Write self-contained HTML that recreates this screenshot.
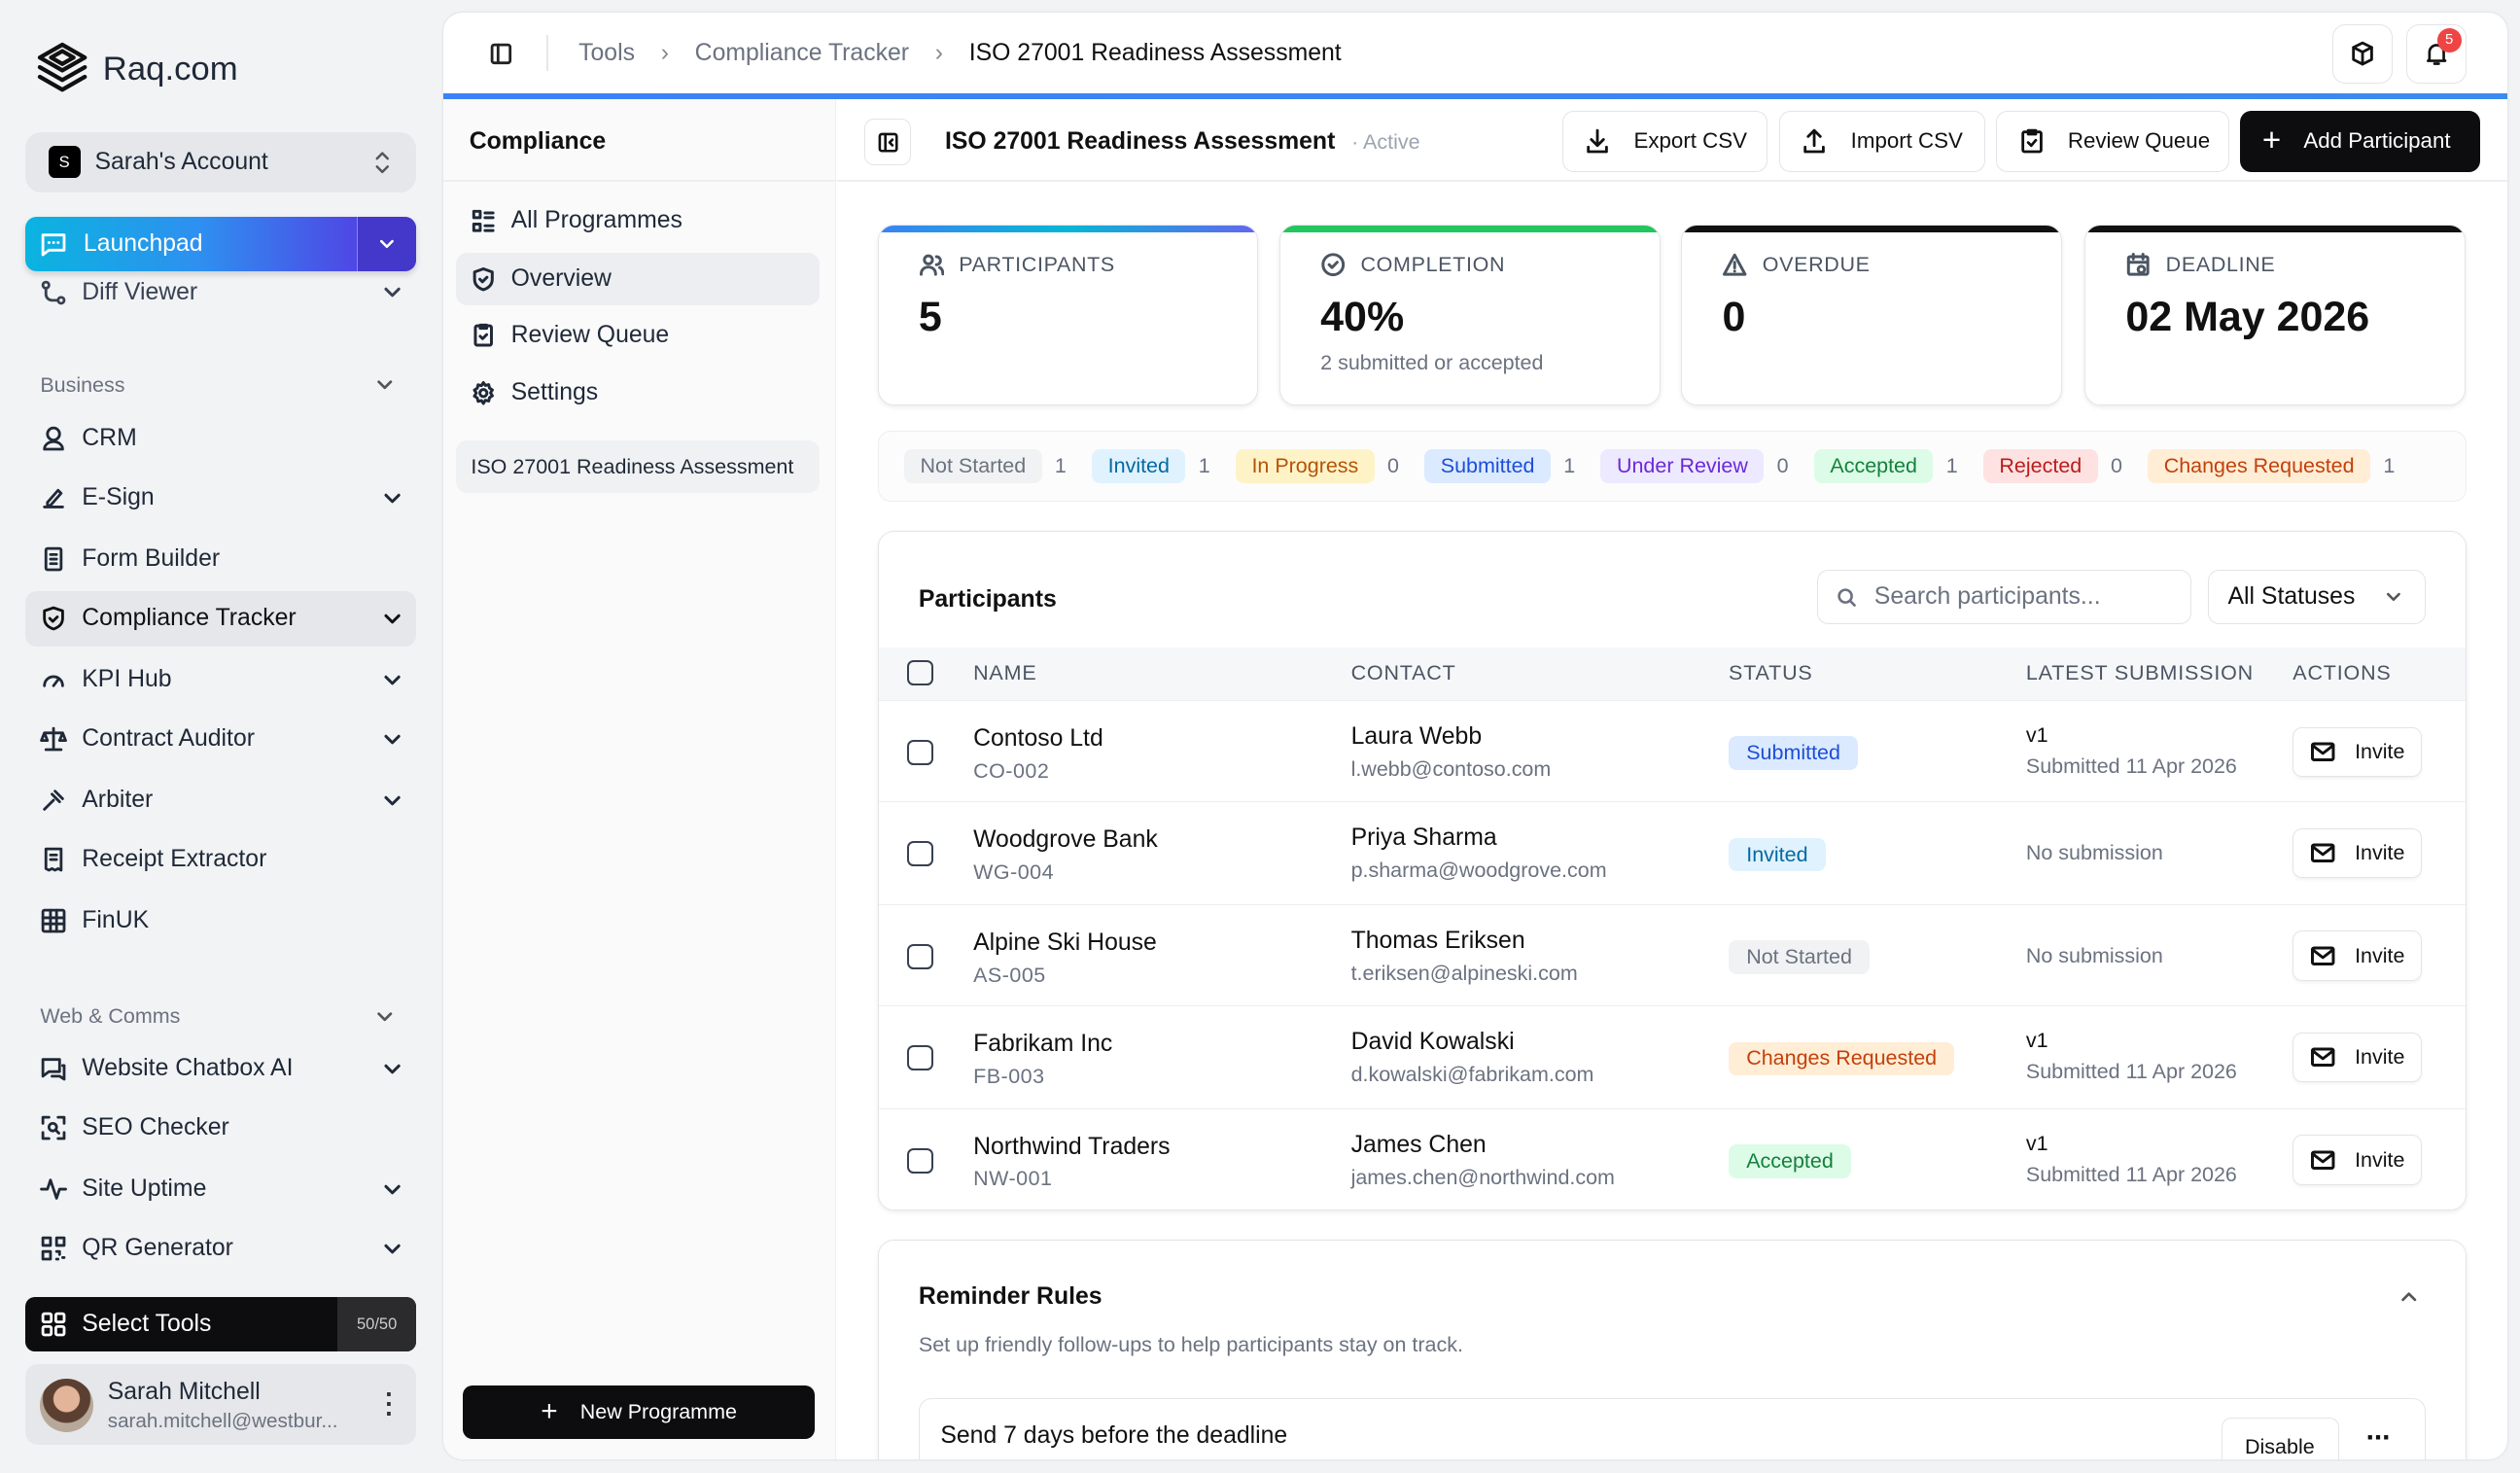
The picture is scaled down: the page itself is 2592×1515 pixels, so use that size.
<!DOCTYPE html>
<html><head><meta charset="utf-8">
<style>
html{zoom:1.6531}
*{box-sizing:border-box;margin:0;padding:0}
body{width:1568px;height:916px;overflow:hidden;background:#f2f3f5;font-family:"Liberation Sans",Arial,sans-serif;color:#111;position:relative;font-size:14px}
.abs{position:absolute}
svg{fill:none;stroke:currentColor;stroke-width:1.8;stroke-linecap:round;stroke-linejoin:round}
.side{left:16px;width:243px}
.item{position:absolute;left:16px;width:243px;height:34px;display:flex;align-items:center;padding-left:9px;font-size:15px;color:#1f2937}
.item svg{width:17px;height:17px;margin-right:9px}
.item .chev{position:absolute;right:8px;width:14px;height:14px;margin:0}
.sec{position:absolute;left:25px;font-size:13px;color:#6b7280}
.main{left:276px;top:8px;width:1284px;height:900px;background:#fff;border-radius:12px;overflow:hidden;box-shadow:0 0 0 1px #e8e9ec}
.nav{position:absolute;left:8px;width:226px;height:33px;display:flex;align-items:center;padding-left:9px;font-size:15px;color:#1f2937;border-radius:7px}
.nav svg{width:16px;height:16px;margin-right:9px}
.btn{position:absolute;top:61px;height:38px;border:1px solid #e2e4e8;border-radius:7px;display:flex;align-items:center;padding:0 13px;font-size:13.5px;color:#111;background:#fff;white-space:nowrap}
.btn svg{width:17px;height:17px;margin-right:14px;flex:none}
.card{position:absolute;top:132px;width:237px;height:112px;border:1px solid #e3e5e9;border-radius:10px;box-shadow:0 1px 3px rgba(0,0,0,.08);overflow:hidden;background:#fff}
.card .bar{height:4px}
.card .lab{position:absolute;left:25px;top:16px;font-size:13px;color:#4b5563;letter-spacing:.4px;display:flex;align-items:center}
.card .lab svg{width:16px;height:16px;margin-right:9px}
.card .val{position:absolute;left:25px;top:42px;font-size:26px;font-weight:bold}
.card .sub{position:absolute;left:25px;top:78px;font-size:13px;color:#6b7280}
.pill{display:inline-block;padding:3px 10px;border-radius:5px;font-size:13px;margin-right:8px}
.cnt{font-size:13px;color:#6b7280;margin-right:12px}
.row{position:absolute;left:0;width:988px;height:63px;border-top:1px solid #eceef1}
.cb{position:absolute;left:18px;width:16px;height:16px;border:1.5px solid #374151;border-radius:4px}
.row .n{position:absolute;left:59px;top:15px;font-size:15px}
.row .c{position:absolute;left:59px;top:36px;font-size:13px;color:#6b7280;letter-spacing:.3px}
.row .p{position:absolute;left:294px;top:14px;font-size:15px}
.row .e{position:absolute;left:294px;top:35px;font-size:13px;color:#6b7280}
.row .st{position:absolute;left:529px;top:22px;font-size:13px;padding:3px 11px;border-radius:5px}
.row .v{position:absolute;left:714px;top:14px;font-size:13px}
.row .sd{position:absolute;left:714px;top:33px;font-size:13px;color:#6b7280}
.row .ns{position:absolute;left:714px;top:24px;font-size:13px;color:#6b7280}
.inv{position:absolute;left:880px;top:16px;width:80px;height:31px;border:1px solid #e2e4e8;border-radius:6px;display:flex;align-items:center;padding-left:10px;font-size:13px;box-shadow:0 1px 2px rgba(0,0,0,.05)}
.inv svg{width:16px;height:16px;margin-right:12px}
</style></head><body>

<div class="abs" style="left:22px;top:25px;display:flex;align-items:center">
<svg viewBox="0 0 34 36" style="width:34px;height:36px;stroke:#111;stroke-width:2.6"><path d="M17 3 3 11l14 8 14-8z"/><path d="M3 17l14 8 14-8"/><path d="M3 23l14 8 14-8"/><path d="M10 11l7-4 7 4-7 4z"/></svg>
<span style="font-size:21px;margin-left:8px;color:#1f2937">Raq.com</span></div>

<div class="abs side" style="top:82px;height:38px;background:#e6e7ea;border-radius:10px;display:flex;align-items:center;padding-left:14px">
<span style="width:20px;height:20px;background:#000;color:#fff;border-radius:4px;font-size:10px;display:flex;align-items:center;justify-content:center">S</span>
<span style="font-size:15px;margin-left:9px;color:#1f2937">Sarah's Account</span>
<svg viewBox="0 0 12 18" style="position:absolute;right:16px;width:10px;height:16px;stroke:#555"><path d="M2 6l4-4 4 4M2 12l4 4 4-4"/></svg></div>

<div class="item" style="top:165px;color:#374151"><svg viewBox="0 0 18 18"><circle cx="4" cy="4" r="2"/><circle cx="14" cy="14" r="2"/><path d="M4 6v4a4 4 0 0 0 4 4h4"/></svg>Diff Viewer<svg class="chev" viewBox="0 0 14 14"><path d="M3 5l4 4 4-4"/></svg></div>

<div class="abs side" style="top:135px;height:34px;border-radius:7px;background:linear-gradient(90deg,#0ab4e0,#2f8ff0 45%,#4f46e5 85%);display:flex;align-items:center;padding-left:9px;color:#fff;font-size:15px;box-shadow:0 2px 4px rgba(0,0,0,.15)">
<svg viewBox="0 0 18 18" style="width:17px;height:17px;margin-right:10px"><path d="M2 3h14v10H6l-4 3z"/><path d="M6 8h.1M9 8h.1M12 8h.1"/></svg>Launchpad
<div style="position:absolute;right:0;top:0;width:37px;height:34px;background:#4338ca;border-left:1px solid rgba(255,255,255,.4);border-radius:0 7px 7px 0;display:flex;align-items:center;justify-content:center"><svg viewBox="0 0 14 14" style="width:12px;height:12px"><path d="M3 5l4 4 4-4"/></svg></div></div>

<div class="sec" style="top:232px">Business</div><svg class="abs" viewBox="0 0 14 14" style="left:233px;top:233px;width:13px;height:13px;stroke:#555"><path d="M3 5l4 4 4-4"/></svg>
<div class="item" style="top:256px"><svg viewBox="0 0 18 18"><circle cx="9" cy="6" r="4"/><path d="M3 16c0-3 3-5 6-5s6 2 6 5z"/></svg>CRM</div>
<div class="item" style="top:293px"><svg viewBox="0 0 18 18"><path d="M3 15h12M5 12l7-8 2 2-7 8H5z"/></svg>E-Sign<svg class="chev" viewBox="0 0 14 14"><path d="M3 5l4 4 4-4"/></svg></div>
<div class="item" style="top:331px"><svg viewBox="0 0 18 18"><rect x="4" y="2" width="10" height="14" rx="1"/><path d="M7 6h4M7 9h4M7 12h4"/></svg>Form Builder</div>
<div class="item" style="top:368px;background:#e6e7ea;border-radius:7px;font-weight:500;color:#111"><svg viewBox="0 0 18 18"><path d="M9 2l6 2v5c0 4-3 6-6 7-3-1-6-3-6-7V4z"/><path d="M6.5 9l2 2 3-3"/></svg>Compliance Tracker<svg class="chev" viewBox="0 0 14 14"><path d="M3 5l4 4 4-4"/></svg></div>
<div class="item" style="top:406px"><svg viewBox="0 0 18 18"><path d="M3 13a6 6 0 1 1 12 0"/><path d="M9 13l3-4"/></svg>KPI Hub<svg class="chev" viewBox="0 0 14 14"><path d="M3 5l4 4 4-4"/></svg></div>
<div class="item" style="top:443px"><svg viewBox="0 0 18 18"><path d="M9 2v14M4 16h10M3 5h12M3 5l-2 5h4zM15 5l-2 5h4z"/></svg>Contract Auditor<svg class="chev" viewBox="0 0 14 14"><path d="M3 5l4 4 4-4"/></svg></div>
<div class="item" style="top:481px"><svg viewBox="0 0 18 18"><path d="M10 3l5 5M8 5l5 5M3 15l6-6"/></svg>Arbiter<svg class="chev" viewBox="0 0 14 14"><path d="M3 5l4 4 4-4"/></svg></div>
<div class="item" style="top:518px"><svg viewBox="0 0 18 18"><path d="M4 2h10v14l-2-1-2 1-2-1-2 1-2-1z"/><path d="M7 6h4M7 9h4"/></svg>Receipt Extractor</div>
<div class="item" style="top:556px"><svg viewBox="0 0 18 18"><rect x="2" y="2" width="14" height="14" rx="1"/><path d="M2 7h14M2 11h14M7 2v14M11 2v14"/></svg>FinUK</div>

<div class="sec" style="top:625px">Web &amp; Comms</div><svg class="abs" viewBox="0 0 14 14" style="left:233px;top:626px;width:13px;height:13px;stroke:#555"><path d="M3 5l4 4 4-4"/></svg>
<div class="item" style="top:648px"><svg viewBox="0 0 18 18"><path d="M2 3h11v8H6l-4 3z"/><path d="M15 7h1v9l-3-2H8"/></svg>Website Chatbox AI<svg class="chev" viewBox="0 0 14 14"><path d="M3 5l4 4 4-4"/></svg></div>
<div class="item" style="top:685px"><svg viewBox="0 0 18 18"><path d="M2 6V2h4M12 2h4v4M16 12v4h-4M6 16H2v-4"/><circle cx="8.5" cy="8.5" r="2.5"/><path d="M10.5 10.5l2 2"/></svg>SEO Checker</div>
<div class="item" style="top:723px"><svg viewBox="0 0 18 18"><path d="M1 9h4l2-6 4 12 2-6h4"/></svg>Site Uptime<svg class="chev" viewBox="0 0 14 14"><path d="M3 5l4 4 4-4"/></svg></div>
<div class="item" style="top:760px"><svg viewBox="0 0 18 18"><rect x="2" y="2" width="5" height="5"/><rect x="11" y="2" width="5" height="5"/><rect x="2" y="11" width="5" height="5"/><path d="M11 11h2v2M15 15h1M11 16h1"/></svg>QR Generator<svg class="chev" viewBox="0 0 14 14"><path d="M3 5l4 4 4-4"/></svg></div>

<div class="abs side" style="top:807px;height:34px;background:#0d0d0f;border-radius:6px;color:#fff;display:flex;align-items:center;padding-left:9px;font-size:15px">
<svg viewBox="0 0 18 18" style="width:17px;height:17px;margin-right:9px"><rect x="2" y="2" width="5.5" height="5.5" rx="1"/><rect x="10.5" y="2" width="5.5" height="5.5" rx="1"/><rect x="2" y="10.5" width="5.5" height="5.5" rx="1"/><rect x="10.5" y="10.5" width="5.5" height="5.5" rx="1"/></svg>Select Tools
<div style="position:absolute;right:0;top:0;width:49px;height:34px;background:#2b2b2e;border-radius:0 6px 6px 0;font-size:10px;color:#ccc;display:flex;align-items:center;justify-content:center">50/50</div></div>

<div class="abs side" style="top:849px;height:50px;background:#e6e7ea;border-radius:8px">
<div style="position:absolute;left:9px;top:9px;width:33px;height:33px;border-radius:50%;background:radial-gradient(circle at 50% 38%,#e2b59a 0 30%,#5b4032 32% 55%,#b7a89a 57%)"></div>
<div style="position:absolute;left:51px;top:9px;font-size:15px;color:#1f2937">Sarah Mitchell</div>
<div style="position:absolute;left:51px;top:28px;font-size:12.5px;color:#6b7280">sarah.mitchell@westbur...</div>
<div style="position:absolute;right:14px;top:16px;font-size:16px;font-weight:bold;line-height:6px;color:#333">·<br>·<br>·</div></div>

<div class="abs main">
 <svg class="abs" viewBox="0 0 16 16" style="left:28px;top:18px;width:15px;height:15px;stroke:#222"><rect x="2" y="2" width="12" height="12" rx="1.5"/><path d="M6 2v12"/></svg>
 <div class="abs" style="left:64px;top:14px;width:1px;height:22px;background:#e5e7eb"></div>
 <div class="abs" style="left:84px;top:17px;font-size:15px;color:#6b7280;white-space:nowrap">Tools <span style="margin:0 12px;color:#888">›</span> Compliance Tracker <span style="margin:0 12px;color:#888">›</span> <span style="color:#111">ISO 27001 Readiness Assessment</span></div>
 <div class="abs" style="left:1175px;top:7px;width:38px;height:37px;border:1px solid #e2e4e8;border-radius:8px;display:flex;align-items:center;justify-content:center"><svg viewBox="0 0 18 18" style="width:17px;height:17px"><path d="M9 2l6 3v8l-6 3-6-3V5z"/><path d="M3 5l6 3 6-3M9 8v8"/></svg></div>
 <div class="abs" style="left:1221px;top:7px;width:38px;height:37px;border:1px solid #e2e4e8;border-radius:8px;display:flex;align-items:center;justify-content:center"><svg viewBox="0 0 18 18" style="width:16px;height:16px"><path d="M4 13V8a5 5 0 0 1 10 0v5l1 1H3zM7.5 16h3"/></svg><span style="position:absolute;right:3px;top:2px;width:15px;height:15px;border-radius:50%;background:#ef4444;color:#fff;font-size:9px;display:flex;align-items:center;justify-content:center">5</span></div>
 <div class="abs" style="left:0;top:50px;width:1284px;height:4px;background:linear-gradient(90deg,#3b82f6,#3b8af0)"></div>

 <div class="abs" style="left:0;top:54px;width:244px;height:846px;background:#fafafb;border-right:1px solid #eceef1">
  <div style="position:absolute;left:16px;top:18px;font-size:15px;font-weight:bold">Compliance</div>
  <div style="position:absolute;left:0;top:50px;width:244px;height:1px;background:#eceef1"></div>
  <div class="nav" style="top:59px"><svg viewBox="0 0 16 16"><rect x="2" y="2" width="4" height="4"/><rect x="2" y="10" width="4" height="4"/><path d="M9 3h5M9 6h5M9 11h5M9 14h5"/></svg>All Programmes</div>
  <div class="nav" style="top:95px;background:#eceef1"><svg viewBox="0 0 16 16"><path d="M8 1.5l5.5 2v4.5c0 3.5-2.5 5.5-5.5 6.5-3-1-5.5-3-5.5-6.5V3.5z"/><path d="M5.8 8l1.6 1.6 2.8-2.8"/></svg>Overview</div>
  <div class="nav" style="top:130px"><svg viewBox="0 0 16 16"><rect x="3" y="2.5" width="10" height="12" rx="1"/><path d="M6 2h4v2H6zM6 9l1.5 1.5L10 8"/></svg>Review Queue</div>
  <div class="nav" style="top:166px"><svg viewBox="0 0 16 16"><circle cx="8" cy="8" r="2.2"/><path d="M8 1.5l1.2 1.8 2.1-.5.5 2.1 1.8 1.2-1.2 1.8 1.2 1.8-1.8 1.2-.5 2.1-2.1-.5L8 14.5l-1.2-1.8-2.1.5-.5-2.1-1.8-1.2L3.6 8 2.4 6.2l1.8-1.2.5-2.1 2.1.5z"/></svg>Settings</div>
  <div class="nav" style="top:212px;height:33px;background:#f0f1f3;font-size:13px">ISO 27001 Readiness Assessment</div>
  <div style="position:absolute;left:12px;top:800px;width:219px;height:33px;background:#0d0d0f;border-radius:6px;color:#fff;font-size:13px;display:flex;align-items:center;justify-content:center"><span style="font-size:18px;margin-right:14px;font-weight:300">+</span>New Programme</div>
 </div>

 <div class="abs" style="left:245px;top:54px;width:1039px;height:846px">
  <div class="abs" style="left:0;top:50px;width:1039px;height:1px;background:#eceef1"></div>
  <div class="abs" style="left:17px;top:12px;width:29px;height:29px;border:1px solid #e2e4e8;border-radius:6px;display:flex;align-items:center;justify-content:center"><svg viewBox="0 0 16 16" style="width:14px;height:14px"><rect x="2" y="2" width="12" height="12" rx="1.5"/><path d="M6 2v12M11 6l-2 2 2 2"/></svg></div>
  <div class="abs" style="left:67px;top:18px;font-size:15px;font-weight:bold;white-space:nowrap">ISO 27001 Readiness Assessment <span style="font-weight:normal;color:#9ca3af;font-size:13px;margin-left:6px">· Active</span></div>
  <div class="btn" style="left:451px;top:7px;width:128px"><svg viewBox="0 0 18 18"><path d="M9 2v9M5 8l4 4 4-4M3 13v3h12v-3"/></svg>Export CSV</div>
  <div class="btn" style="left:586px;top:7px;width:128px"><svg viewBox="0 0 18 18"><path d="M9 12V3M5 6l4-4 4 4M3 13v3h12v-3"/></svg>Import CSV</div>
  <div class="btn" style="left:721px;top:7px;width:145px"><svg viewBox="0 0 18 18"><rect x="3" y="3" width="12" height="13" rx="1"/><path d="M6.5 2h5v2.5h-5zM6.5 10l2 2 3-3.5"/></svg>Review Queue</div>
  <div class="btn" style="left:873px;top:7px;width:149px;background:#0d0d0f;color:#fff;border-color:#0d0d0f"><span style="font-size:20px;margin-right:14px;font-weight:300">+</span>Add Participant</div>

  <div class="card" style="left:25px;top:78px"><div class="bar" style="background:linear-gradient(90deg,#3b82f6,#06b6d4,#6366f1)"></div><div class="lab"><svg viewBox="0 0 16 16"><circle cx="6" cy="5" r="2.5"/><path d="M1.5 14c0-3 2-4.5 4.5-4.5s4.5 1.5 4.5 4.5M11 3a2.5 2.5 0 0 1 0 5M13 9.8c1.5.6 2 2 2 4"/></svg>PARTICIPANTS</div><div class="val">5</div></div>
  <div class="card" style="left:275px;top:78px"><div class="bar" style="background:#22c55e"></div><div class="lab"><svg viewBox="0 0 16 16"><circle cx="8" cy="8" r="6.3"/><path d="M5.5 8l1.8 1.8L10.5 6.5"/></svg>COMPLETION</div><div class="val">40%</div><div class="sub">2 submitted or accepted</div></div>
  <div class="card" style="left:525px;top:78px"><div class="bar" style="background:#111"></div><div class="lab"><svg viewBox="0 0 16 16"><path d="M8 2L1.5 14h13z"/><path d="M8 6.5v3.5M8 12h.01"/></svg>OVERDUE</div><div class="val">0</div></div>
  <div class="card" style="left:776px;top:78px"><div class="bar" style="background:#111"></div><div class="lab"><svg viewBox="0 0 16 16"><rect x="2" y="3" width="12" height="11" rx="1"/><path d="M5 1.5v3M11 1.5v3M2 6.5h12"/><circle cx="10" cy="11" r="2"/></svg>DEADLINE</div><div class="val">02 May 2026</div></div>

  <div class="abs" style="left:25px;top:206px;width:989px;height:44px;border:1px solid #eceef1;border-radius:8px;background:#fcfcfd;padding:11px 0 0 16px;white-space:nowrap">
   <span class="pill" style="background:#f1f2f4;color:#6b7280">Not Started</span><span class="cnt">1</span>
   <span class="pill" style="background:#e0f2fe;color:#0369a1">Invited</span><span class="cnt">1</span>
   <span class="pill" style="background:#fef3c7;color:#b45309">In Progress</span><span class="cnt">0</span>
   <span class="pill" style="background:#dbeafe;color:#1d4ed8">Submitted</span><span class="cnt">1</span>
   <span class="pill" style="background:#ede9fe;color:#6d28d9">Under Review</span><span class="cnt">0</span>
   <span class="pill" style="background:#dcfce7;color:#15803d">Accepted</span><span class="cnt">1</span>
   <span class="pill" style="background:#fee2e2;color:#b91c1c">Rejected</span><span class="cnt">0</span>
   <span class="pill" style="background:#ffedd5;color:#c2410c">Changes Requested</span><span class="cnt">1</span>
  </div>

  <div class="abs" style="left:25px;top:268px;width:989px;height:423px;border:1px solid #e3e5e9;border-radius:10px;box-shadow:0 1px 3px rgba(0,0,0,.07);overflow:hidden">
   <div class="abs" style="left:25px;top:34px;font-size:15px;font-weight:bold">Participants</div>
   <div class="abs" style="left:584px;top:24px;width:233px;height:34px;border:1px solid #e2e4e8;border-radius:7px;display:flex;align-items:center;padding-left:11px;font-size:15px;color:#6b7280"><svg viewBox="0 0 16 16" style="width:14px;height:14px;margin-right:10px"><circle cx="7" cy="7" r="4.5"/><path d="M10.5 10.5l3 3"/></svg>Search participants...</div>
   <div class="abs" style="left:827px;top:24px;width:136px;height:34px;border:1px solid #e2e4e8;border-radius:7px;display:flex;align-items:center;padding-left:12px;font-size:15px">All Statuses<svg viewBox="0 0 14 14" style="position:absolute;right:14px;width:12px;height:12px;stroke:#555"><path d="M3 5l4 4 4-4"/></svg></div>
   <div class="abs" style="left:0;top:72px;width:989px;height:33px;background:#f6f7f9;font-size:13px;color:#4b5563;letter-spacing:.5px">
    <div class="cb" style="top:8px"></div>
    <span class="abs" style="left:59px;top:9px">NAME</span><span class="abs" style="left:294px;top:9px">CONTACT</span><span class="abs" style="left:529px;top:9px">STATUS</span><span class="abs" style="left:714px;top:9px">LATEST SUBMISSION</span><span class="abs" style="left:880px;top:9px">ACTIONS</span>
   </div>
   <div class="row" style="top:105px"><div class="cb" style="top:24px"></div><div class="n">Contoso Ltd</div><div class="c">CO-002</div><div class="p">Laura Webb</div><div class="e">l.webb@contoso.com</div><div class="st" style="background:#dbeafe;color:#1d4ed8">Submitted</div><div class="v">v1</div><div class="sd">Submitted 11 Apr 2026</div><div class="inv"><svg viewBox="0 0 16 16"><rect x="1.5" y="3" width="13" height="10" rx="1"/><path d="M1.5 4l6.5 5 6.5-5"/></svg>Invite</div></div>
   <div class="row" style="top:168px"><div class="cb" style="top:24px"></div><div class="n">Woodgrove Bank</div><div class="c">WG-004</div><div class="p">Priya Sharma</div><div class="e">p.sharma@woodgrove.com</div><div class="st" style="background:#e0f2fe;color:#0369a1">Invited</div><div class="ns">No submission</div><div class="inv"><svg viewBox="0 0 16 16"><rect x="1.5" y="3" width="13" height="10" rx="1"/><path d="M1.5 4l6.5 5 6.5-5"/></svg>Invite</div></div>
   <div class="row" style="top:232px"><div class="cb" style="top:24px"></div><div class="n">Alpine Ski House</div><div class="c">AS-005</div><div class="p">Thomas Eriksen</div><div class="e">t.eriksen@alpineski.com</div><div class="st" style="background:#f1f2f4;color:#6b7280">Not Started</div><div class="ns">No submission</div><div class="inv"><svg viewBox="0 0 16 16"><rect x="1.5" y="3" width="13" height="10" rx="1"/><path d="M1.5 4l6.5 5 6.5-5"/></svg>Invite</div></div>
   <div class="row" style="top:295px"><div class="cb" style="top:24px"></div><div class="n">Fabrikam Inc</div><div class="c">FB-003</div><div class="p">David Kowalski</div><div class="e">d.kowalski@fabrikam.com</div><div class="st" style="background:#ffedd5;color:#c2410c">Changes Requested</div><div class="v">v1</div><div class="sd">Submitted 11 Apr 2026</div><div class="inv"><svg viewBox="0 0 16 16"><rect x="1.5" y="3" width="13" height="10" rx="1"/><path d="M1.5 4l6.5 5 6.5-5"/></svg>Invite</div></div>
   <div class="row" style="top:359px"><div class="cb" style="top:24px"></div><div class="n">Northwind Traders</div><div class="c">NW-001</div><div class="p">James Chen</div><div class="e">james.chen@northwind.com</div><div class="st" style="background:#dcfce7;color:#15803d">Accepted</div><div class="v">v1</div><div class="sd">Submitted 11 Apr 2026</div><div class="inv"><svg viewBox="0 0 16 16"><rect x="1.5" y="3" width="13" height="10" rx="1"/><path d="M1.5 4l6.5 5 6.5-5"/></svg>Invite</div></div>
  </div>

  <div class="abs" style="left:25px;top:709px;width:989px;height:170px;border:1px solid #e3e5e9;border-radius:10px;box-shadow:0 1px 3px rgba(0,0,0,.07)">
   <div class="abs" style="left:25px;top:27px;font-size:15px;font-weight:bold">Reminder Rules</div>
   <svg class="abs" viewBox="0 0 14 14" style="left:946px;top:29px;width:13px;height:13px;stroke:#555"><path d="M3 9l4-4 4 4"/></svg>
   <div class="abs" style="left:25px;top:58px;font-size:13px;color:#6b7280">Set up friendly follow-ups to help participants stay on track.</div>
   <div class="abs" style="left:25px;top:98px;width:938px;height:60px;border:1px solid #e3e5e9;border-radius:8px">
    <div class="abs" style="left:13px;top:15px;font-size:15px">Send 7 days before the deadline</div>
    <div class="abs" style="left:810px;top:12px;width:73px;height:34px;border:1px solid #e2e4e8;border-radius:6px;font-size:13px;padding:10px 0 0 14px">Disable</div>
    <div class="abs" style="left:900px;top:14px;font-size:18px;font-weight:bold;letter-spacing:-1px">···</div>
   </div>
  </div>
 </div>
</div>
</body></html>
